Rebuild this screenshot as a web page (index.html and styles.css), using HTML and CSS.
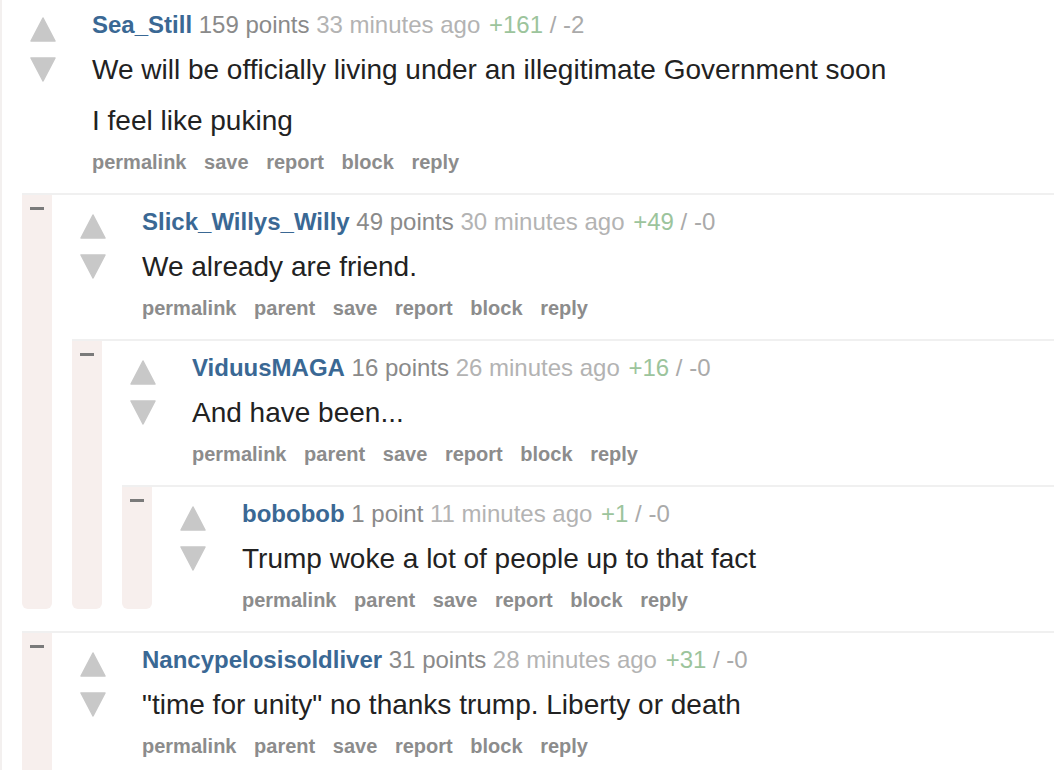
FILE: index.html
```html
<!DOCTYPE html>
<html lang="en">
<head>
    <meta charset="UTF-8">
    <meta name="viewport" content="width=device-width, initial-scale=1.0">
    <title>Comments</title>
    <link rel="stylesheet" href="styles.css">
</head>
<body>
    <div class="thread">
        <!-- Top level comment -->
        <div class="comment top">
            <div class="bar"></div>
            <div class="main">
                <div class="entry">
                    <div class="votes">
                        <svg class="arrow" viewBox="0 0 26 25"><polygon points="13,1 25,24 1,24"/></svg>
                        <svg class="arrow down" viewBox="0 0 26 25"><polygon points="1,1 25,1 13,24"/></svg>
                    </div>
                    <div class="content">
                        <p class="tagline"><a class="author">Sea_Still</a> <span class="score">159 points</span> <span class="time">33 minutes ago</span> <span class="ups">+161</span> <span class="downs">/ -2</span></p>
                        <div class="md">
                            <p>We will be officially living under an illegitimate Government soon</p>
                            <p>I feel like puking</p>
                        </div>
                        <ul class="buttons">
                            <li>permalink</li>
                            <li>save</li>
                            <li>report</li>
                            <li>block</li>
                            <li>reply</li>
                        </ul>
                    </div>
                </div>
                <div class="children">
                    <div class="comment">
                        <div class="bar"><span class="minus"></span></div>
                        <div class="main">
                            <div class="entry">
                                <div class="votes">
                                    <svg class="arrow" viewBox="0 0 26 25"><polygon points="13,1 25,24 1,24"/></svg>
                                    <svg class="arrow down" viewBox="0 0 26 25"><polygon points="1,1 25,1 13,24"/></svg>
                                </div>
                                <div class="content">
                                    <p class="tagline"><a class="author">Slick_Willys_Willy</a> <span class="score">49 points</span> <span class="time">30 minutes ago</span> <span class="ups">+49</span> <span class="downs">/ -0</span></p>
                                    <div class="md">
                                        <p>We already are friend.</p>
                                    </div>
                                    <ul class="buttons">
                                        <li>permalink</li>
                                        <li>parent</li>
                                        <li>save</li>
                                        <li>report</li>
                                        <li>block</li>
                                        <li>reply</li>
                                    </ul>
                                </div>
                            </div>
                            <div class="children">
                                <div class="comment">
                                    <div class="bar"><span class="minus"></span></div>
                                    <div class="main">
                                        <div class="entry">
                                            <div class="votes">
                                                <svg class="arrow" viewBox="0 0 26 25"><polygon points="13,1 25,24 1,24"/></svg>
                                                <svg class="arrow down" viewBox="0 0 26 25"><polygon points="1,1 25,1 13,24"/></svg>
                                            </div>
                                            <div class="content">
                                                <p class="tagline"><a class="author">ViduusMAGA</a> <span class="score">16 points</span> <span class="time">26 minutes ago</span> <span class="ups">+16</span> <span class="downs">/ -0</span></p>
                                                <div class="md">
                                                    <p>And have been...</p>
                                                </div>
                                                <ul class="buttons">
                                                    <li>permalink</li>
                                                    <li>parent</li>
                                                    <li>save</li>
                                                    <li>report</li>
                                                    <li>block</li>
                                                    <li>reply</li>
                                                </ul>
                                            </div>
                                        </div>
                                        <div class="children">
                                            <div class="comment">
                                                <div class="bar"><span class="minus"></span></div>
                                                <div class="main">
                                                    <div class="entry">
                                                        <div class="votes">
                                                            <svg class="arrow" viewBox="0 0 26 25"><polygon points="13,1 25,24 1,24"/></svg>
                                                            <svg class="arrow down" viewBox="0 0 26 25"><polygon points="1,1 25,1 13,24"/></svg>
                                                        </div>
                                                        <div class="content">
                                                            <p class="tagline"><a class="author">bobobob</a> <span class="score">1 point</span> <span class="time">11 minutes ago</span> <span class="ups">+1</span> <span class="downs">/ -0</span></p>
                                                            <div class="md">
                                                                <p>Trump woke a lot of people up to that fact</p>
                                                            </div>
                                                            <ul class="buttons">
                                                                <li>permalink</li>
                                                                <li>parent</li>
                                                                <li>save</li>
                                                                <li>report</li>
                                                                <li>block</li>
                                                                <li>reply</li>
                                                            </ul>
                                                        </div>
                                                    </div>
                                                </div>
                                            </div>
                                        </div>
                                    </div>
                                </div>
                            </div>
                        </div>
                    </div>

                    <div class="comment more">
                        <div class="bar"><span class="minus"></span></div>
                        <div class="main">
                            <div class="entry">
                                <div class="votes">
                                    <svg class="arrow" viewBox="0 0 26 25"><polygon points="13,1 25,24 1,24"/></svg>
                                    <svg class="arrow down" viewBox="0 0 26 25"><polygon points="1,1 25,1 13,24"/></svg>
                                </div>
                                <div class="content">
                                    <p class="tagline"><a class="author">Nancypelosisoldliver</a> <span class="score">31 points</span> <span class="time">28 minutes ago</span> <span class="ups">+31</span> <span class="downs">/ -0</span></p>
                                    <div class="md">
                                        <p>"time for unity" no thanks trump. Liberty or death</p>
                                    </div>
                                    <ul class="buttons">
                                        <li>permalink</li>
                                        <li>parent</li>
                                        <li>save</li>
                                        <li>report</li>
                                        <li>block</li>
                                        <li>reply</li>
                                    </ul>
                                </div>
                            </div>
                        </div>
                    </div>
                </div>
            </div>
        </div>
    </div>
</body>
</html>
```

FILE: styles.css
```css
/* General Styles */
body {
    margin: 0;
    font-family: "Liberation Sans", Arial, sans-serif;
    background-color: #fff;
    color: #222;
    overflow: hidden;
}

.thread {
    width: 1054px;
}

/* Comment box */
.comment {
    display: flex;
    border-top: 2px solid #f0f0f0;
    margin-top: 22px;
}

.comment.top {
    border-top: none;
    margin-top: 0;
}

.bar {
    width: 30px;
    flex-shrink: 0;
    background-color: #f7efed;
    border-radius: 0 0 6px 6px;
}

.comment.top > .bar {
    width: 2px;
    background-color: #f3f0ef;
    border-radius: 0;
}

.minus {
    display: block;
    width: 14px;
    height: 3px;
    margin: 12px 0 0 8px;
    background-color: #7a7a7a;
}

.main {
    flex: 1;
    min-width: 0;
}

.entry {
    display: flex;
    padding-top: 14px;
}

.comment.top > .main > .entry {
    padding-top: 12px;
}

.comment.more > .main {
    padding-bottom: 40px;
}

/* Vote arrows */
.votes {
    width: 62px;
    flex-shrink: 0;
    padding: 5px 0 0 28px;
    display: flex;
    flex-direction: column;
    gap: 15px;
}

.arrow {
    width: 26px;
    height: 25px;
    fill: #c8c8c8;
    stroke: #c8c8c8;
    stroke-width: 1.5;
    stroke-linejoin: round;
}

.content {
    flex: 1;
    min-width: 0;
}

/* Tagline */
.tagline {
    margin: 0;
    font-size: 24px;
    line-height: 26px;
    color: #8a8a8a;
    white-space: nowrap;
}

.author {
    color: #3a6894;
    font-weight: bold;
}

.time {
    color: #b3b3b3;
}

.ups {
    color: #9cc49c;
    margin-left: 2px;
}

.downs {
    color: #aaa;
}

/* Body text */
.md p {
    margin: 17px 0 0;
    font-size: 28px;
    line-height: 34px;
    color: #222;
}

.md p:first-child {
    margin-top: 15px;
}

/* Buttons */
.buttons {
    list-style: none;
    margin: 15px 0 0;
    padding: 0;
    display: flex;
    gap: 17.6px;
    font-size: 20px;
    line-height: 18px;
    font-weight: bold;
    color: #8c8c8c;
}

.children {
    margin-left: 20px;
}
```
